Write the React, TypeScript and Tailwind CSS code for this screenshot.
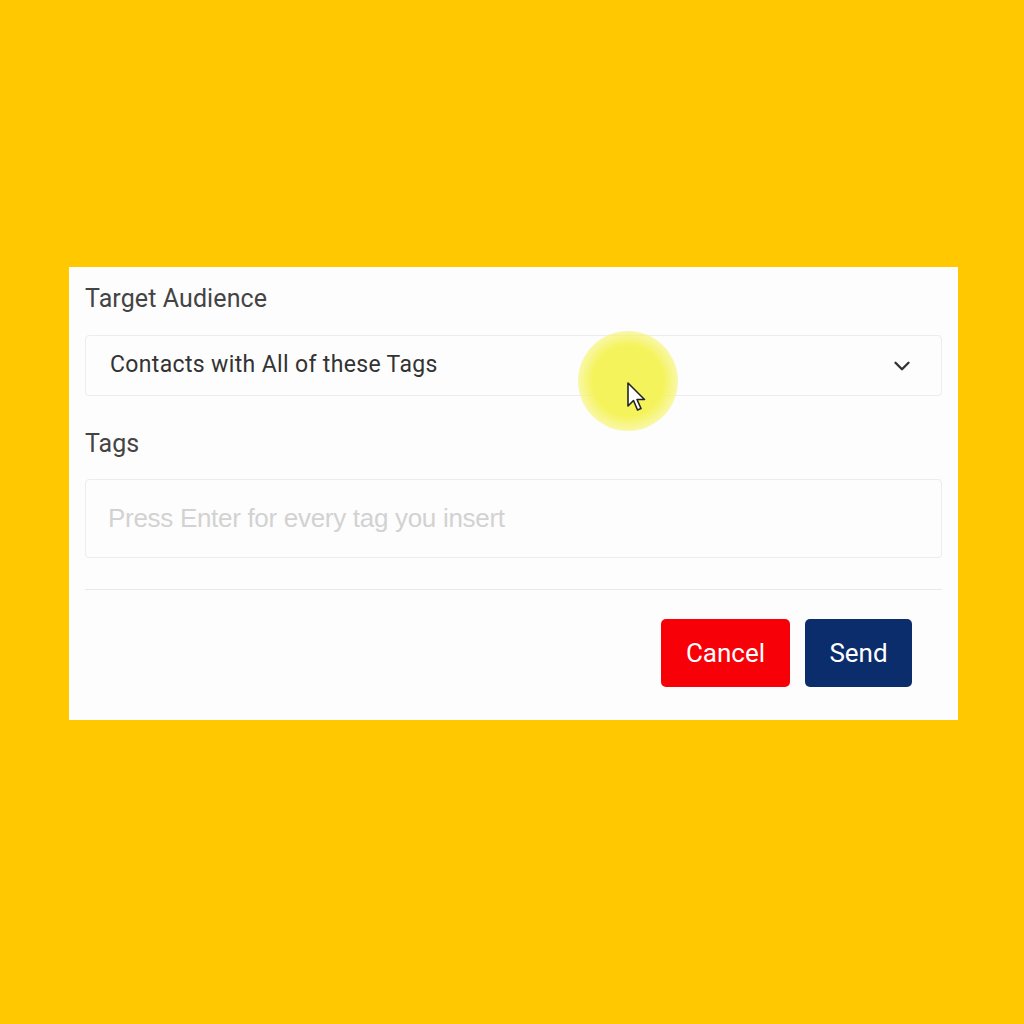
import { ChevronDown } from "lucide-react";

const App = () => {
  return (
    <div className="w-[1024px] h-[1024px] bg-[#ffc800] pt-[267px] pl-[69px] font-['Roboto',sans-serif]">
      <div className="w-[889px] h-[453px] bg-[#fdfdfd] px-[16px] pt-[14px] flex flex-col">
        <label className="text-[25px] text-[#444] leading-[36px] tracking-[0.1px]">Target Audience</label>
        <div className="relative mt-[18px] h-[61px] border border-[#ececec] rounded-[4px] flex items-center justify-between pl-[24px] pr-[26px]">
          <span className="text-[23px] text-[#333] tracking-[0.35px]">Contacts with All of these Tags</span>
          <ChevronDown className="w-[26px] h-[26px] text-[#333]" strokeWidth={2.2} />
          {/* cursor highlight */}
          <div className="absolute left-[492px] top-[-5px] w-[100px] h-[100px] rounded-full bg-[radial-gradient(circle,#f5f35c_0%,#f5f35c_50%,rgba(246,244,110,0.55)_72%,rgba(250,250,200,0)_100%)]" />
          <svg className="absolute left-[540px] top-[45px]" width="22" height="32" viewBox="0 0 22 32">
            <path d="M2 2 L2 25 L7.5 19.5 L11.5 29 L15 27.5 L11 18.5 L18.5 18.5 Z" fill="#fff" stroke="#222" strokeWidth="1.6" strokeLinejoin="round" />
          </svg>
        </div>
        <label className="text-[25px] text-[#444] leading-[36px] mt-[30px]">Tags</label>
        <div className="mt-[17px] h-[79px] border border-[#ececec] rounded-[4px] flex items-center pl-[22px]">
          <span className="text-[26px] text-[#d2d2d2] font-['Liberation_Sans',sans-serif] tracking-[-0.3px]">
            Press Enter for every tag you insert
          </span>
        </div>
        <div className="mt-[31px] border-t border-[#e8e8e8]" />
        <div className="flex justify-end gap-[15px] mt-[29px] pr-[30px]">
          <button className="w-[129px] h-[68px] rounded-[5px] bg-[#f80008] text-white text-[26px]">Cancel</button>
          <button className="w-[107px] h-[68px] rounded-[5px] bg-[#0b2d6b] text-white text-[26px]">Send</button>
        </div>
      </div>
    </div>
  );
};

export default App;
